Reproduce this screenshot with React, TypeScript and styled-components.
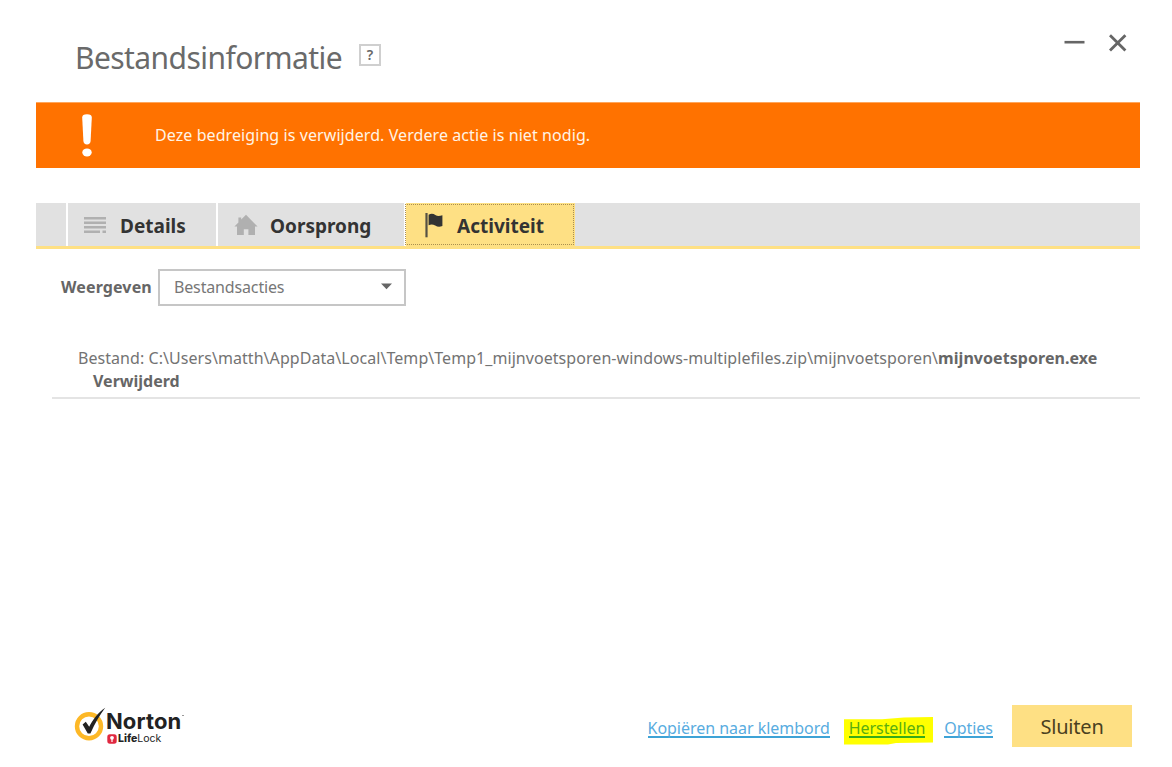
import React from "react";
import styled, { createGlobalStyle } from "styled-components";

const GlobalStyle = createGlobalStyle`
  *, *::before, *::after { box-sizing: border-box; }
  body {
    margin: 0;
    background: #fff;
    color: #666;
    font-family: "Noto Sans", "Open Sans", sans-serif;
    font-size: 16px;
  }
`;

const Window = styled.main`
  display: flex;
  flex-direction: column;
  width: 1172px;
  height: 767px;
  padding: 0 32px 0 36px;
  overflow: hidden;
`;

const Header = styled.header`
  display: flex;
  justify-content: space-between;
  height: 102px;
  padding: 0 13px 0 40px;
`;

const TitleGroup = styled.div`
  display: flex;
  align-items: flex-start;
  gap: 17px;
`;

const Title = styled.h1`
  margin: 37px 0 0 -1px;
  color: #6a6a6a;
  font-size: 30px;
  font-weight: 400;
  letter-spacing: -0.57px;
  line-height: 41px;
`;

const HelpButton = styled.button`
  width: 22px;
  height: 22px;
  margin-top: 44px;
  padding: 0;
  border: 2px solid #cfcfcf;
  background: #fff;
  color: #666;
  font: 600 14px/18px "Noto Sans", sans-serif;
`;

const WindowControls = styled.div`
  display: flex;
  gap: 24px;
  margin-top: 33px;
  height: 20px;
  align-items: center;
`;

const Banner = styled.section`
  display: flex;
  align-items: center;
  height: 66px;
  padding-left: 45px;
  background: #ff7200;
  border-top: 1px solid #ffa65c;
  color: #fff4e6;
`;

const BannerMark = styled.svg`
  margin-bottom: 2px;
`;

const BannerText = styled.p`
  margin: 0 0 2px 62px;
  letter-spacing: 0.08px;
`;

const TabBar = styled.nav`
  display: flex;
  height: 46px;
  margin-top: 35px;
  background: #e1e1e1;
  border-bottom: 3px solid #fee084;
`;

const TabSpacer = styled.div`
  width: 30px;
`;

const Tab = styled.button<{ $active?: boolean; $width: number; $gap: number }>`
  display: flex;
  align-items: center;
  gap: ${(p) => p.$gap}px;
  width: ${(p) => p.$width}px;
  padding: 0 0 0 ${(p) => (p.$active ? 19 : 16)}px;
  border: 0 solid #fff;
  border-left-width: 2px;
  background: ${(p) => (p.$active ? "#fee084" : "transparent")};
  color: #333;
  font: 700 19px/26px "Noto Sans", sans-serif;
  text-align: left;
  outline: ${(p) => (p.$active ? "1px dotted #a98f50" : "none")};
  outline-offset: -2px;

  & > svg { margin-top: 1px; }
`;

const TabLabel = styled.span`
  padding-top: 2px;
`;

const FilterRow = styled.div`
  display: flex;
  align-items: center;
  margin-top: 20px;
  padding-left: 25px;
`;

const FilterLabel = styled.label`
  width: 97px;
  padding-bottom: 2px;
  font-weight: 700;
  letter-spacing: 0.13px;
`;

const Select = styled.div`
  display: flex;
  align-items: center;
  justify-content: space-between;
  width: 248px;
  height: 37px;
  padding: 0 12px 2px 14px;
  border: 2px solid #c6c6c6;
  color: #777;
  letter-spacing: -0.15px;
`;

const ActionItem = styled.article`
  margin: 41px 0 0 16px;
  padding: 0 0 4px 26px;
  border-bottom: 2px solid #e4e4e4;
  color: #737373;
  line-height: 23px;
  white-space: nowrap;
`;

const FilePath = styled.div`
  letter-spacing: 0.055px;
`;

const Strong = styled.strong`
  color: #666;
  font-weight: 700;
`;

const ActionState = styled.div`
  padding-left: 15px;
  color: #666;
  font-weight: 700;
`;

const Footer = styled.footer`
  display: flex;
  align-items: flex-start;
  height: 62px;
  margin-top: auto;
  padding-right: 8px;
`;

const Brand = styled.div`
  display: flex;
  margin: 2px auto 0 38px;
`;

const BrandText = styled.div`
  display: flex;
  flex-direction: column;
  margin-left: 1px;
  color: #222;
`;

const BrandName = styled.span`
  display: flex;
  align-items: flex-start;
  margin-top: 4px;
  margin-left: -1px;
  font: 700 22px/21px Inter, sans-serif;
  letter-spacing: 0.1px;
`;

const BrandSub = styled.span`
  display: flex;
  align-items: center;
  font: 400 10.5px/13px Inter, sans-serif;

  b { margin-left: 1px; font-weight: 800; }
`;

const TradeDot = styled.i`
  width: 2px;
  height: 1px;
  margin: 4px 0 0 1px;
  background: #999;
`;

const Links = styled.div`
  display: flex;
  margin-top: 12px;
`;

const FooterLink = styled.a<{ $marked?: boolean }>`
  position: relative;
  height: 21px;
  margin-right: 19px;
  border-bottom: 2px solid ${(p) => (p.$marked ? "#36ab1a" : "#3ea3d6")};
  color: ${(p) => (p.$marked ? "#5aae10" : "#58ace0")};
  letter-spacing: ${(p) => (p.$marked ? "-0.06px" : "-0.03px")};
  line-height: 23px;
  white-space: nowrap;
`;

const Highlight = styled.svg`
  position: absolute;
  z-index: -1;
  left: -5px;
  top: 0;
`;

const CloseButton = styled.button`
  width: 120px;
  height: 42px;
  padding: 2px 0 0;
  border: 0;
  background: #fee084;
  color: #4a4020;
  font: 400 20px/28px "Noto Sans", sans-serif;
  letter-spacing: -0.2px;
`;

const Exclamation = () => (
  <BannerMark width="12" height="44" viewBox="0 0 12 44" fill="#fff">
    <path d="M1.2 4.5Q1.2 1.2 6 1.2T10.8 4.5L9.6 28Q9.3 31.4 6 31.4T2.4 28Z" />
    <ellipse cx="6" cy="39.4" rx="4.7" ry="4" />
  </BannerMark>
);

const ListIcon = () => (
  <svg width="22" height="18" viewBox="0 0 22 18" fill="#b0b0b0">
    <path d="M0 1h22v2.4H0zM0 5.5h22v2.4H0zM0 10h22v2.4H0zM0 14.5h16v2.4H0zM18.5 14.5H22v2.4h-3.5z" />
  </svg>
);

const HomeIcon = () => (
  <svg width="24" height="22" viewBox="0 0 24 22" fill="#b0b0b0">
    <path d="M12 0.8 23.6 12.6H21V21H14.4V15.2H9.8V21H3V12.6H0.4L4.4 8.4V3.6H7.2V5.6Z" />
  </svg>
);

const FlagIcon = () => (
  <svg width="18" height="26" viewBox="0 0 18 26">
    <path d="M1.5 1V25.3" stroke="#555144" strokeWidth="2.2" />
    <path d="M3.6 2.8C6 1.3 8.4 1.6 10.3 3C12.5 4.4 14.5 4.2 17.4 3.2V14C14.7 15.2 12.5 15 10.2 13.6C8 12.2 6 12 3.6 13.2Z" fill="#333" />
  </svg>
);

const NortonMark = () => (
  <svg width="32" height="36" viewBox="0 0 32 36" fill="none">
    <circle cx="15" cy="19.3" r="12" stroke="#fdb827" strokeWidth="4.4" />
    <path d="M8.6 17.6 11.8 14.8 15.2 19.8C18.6 13.2 23.5 6 31.2 0.8C26 8 21 16 16.4 26.4H13.8Z" fill="#222" />
  </svg>
);

const LockMark = () => (
  <svg width="10" height="10" viewBox="0 0 10 10">
    <rect x="0.3" y="0.3" width="9.4" height="9.4" rx="2.6" fill="#e02840" />
    <circle cx="5" cy="3.8" r="1.9" fill="#fff" />
    <path d="M4.4 5H5.6V8H4.4Z" fill="#fff" />
  </svg>
);

export default function App() {
  return (
    <>
      <GlobalStyle />
      <Window>
        <Header>
          <TitleGroup>
            <Title>Bestandsinformatie</Title>
            <HelpButton>?</HelpButton>
          </TitleGroup>
          <WindowControls>
            <svg width="21" height="20" viewBox="0 0 21 20" stroke="#666" strokeWidth="2.6">
              <path d="M0.5 9.2H20.5" />
            </svg>
            <svg width="18" height="20" viewBox="0 0 18 20" stroke="#666" strokeWidth="2.8">
              <path d="M1 2.2 16.4 17.6M16.4 2.2 1 17.6" />
            </svg>
          </WindowControls>
        </Header>

        <Banner>
          <Exclamation />
          <BannerText>Deze bedreiging is verwijderd. Verdere actie is niet nodig.</BannerText>
        </Banner>

        <TabBar>
          <TabSpacer />
          <Tab $width={150} $gap={14}>
            <ListIcon />
            <TabLabel>Details</TabLabel>
          </Tab>
          <Tab $width={188} $gap={12}>
            <HomeIcon />
            <TabLabel>Oorsprong</TabLabel>
          </Tab>
          <Tab $active $width={171} $gap={14}>
            <FlagIcon />
            <TabLabel>Activiteit</TabLabel>
          </Tab>
        </TabBar>

        <FilterRow>
          <FilterLabel>Weergeven</FilterLabel>
          <Select>
            Bestandsacties
            <svg width="11" height="7" viewBox="0 0 11 7" fill="#666">
              <path d="M0 0.5H11L5.5 6.3Z" />
            </svg>
          </Select>
        </FilterRow>

        <ActionItem>
          <FilePath>
            Bestand: C:\Users\matth\AppData\Local\Temp\Temp1_mijnvoetsporen-windows-multiplefiles.zip\mijnvoetsporen\
            <Strong>mijnvoetsporen.exe</Strong>
          </FilePath>
          <ActionState>Verwijderd</ActionState>
        </ActionItem>

        <Footer>
          <Brand>
            <NortonMark />
            <BrandText>
              <BrandName>
                Norton
                <TradeDot />
              </BrandName>
              <BrandSub>
                <LockMark />
                <b>Life</b>Lock
              </BrandSub>
            </BrandText>
          </Brand>
          <Links>
            <FooterLink>Kopiëren naar klembord</FooterLink>
            <FooterLink $marked>
              <Highlight width="90" height="28" viewBox="0 0 90 28" fill="#ff0">
                <path d="M0 2.2 38 2.2 60 0.4 89 0V25.5L52 26 44 27.5H0Z" />
              </Highlight>
              Herstellen
            </FooterLink>
            <FooterLink>Opties</FooterLink>
          </Links>
          <CloseButton>Sluiten</CloseButton>
        </Footer>
      </Window>
    </>
  );
}
